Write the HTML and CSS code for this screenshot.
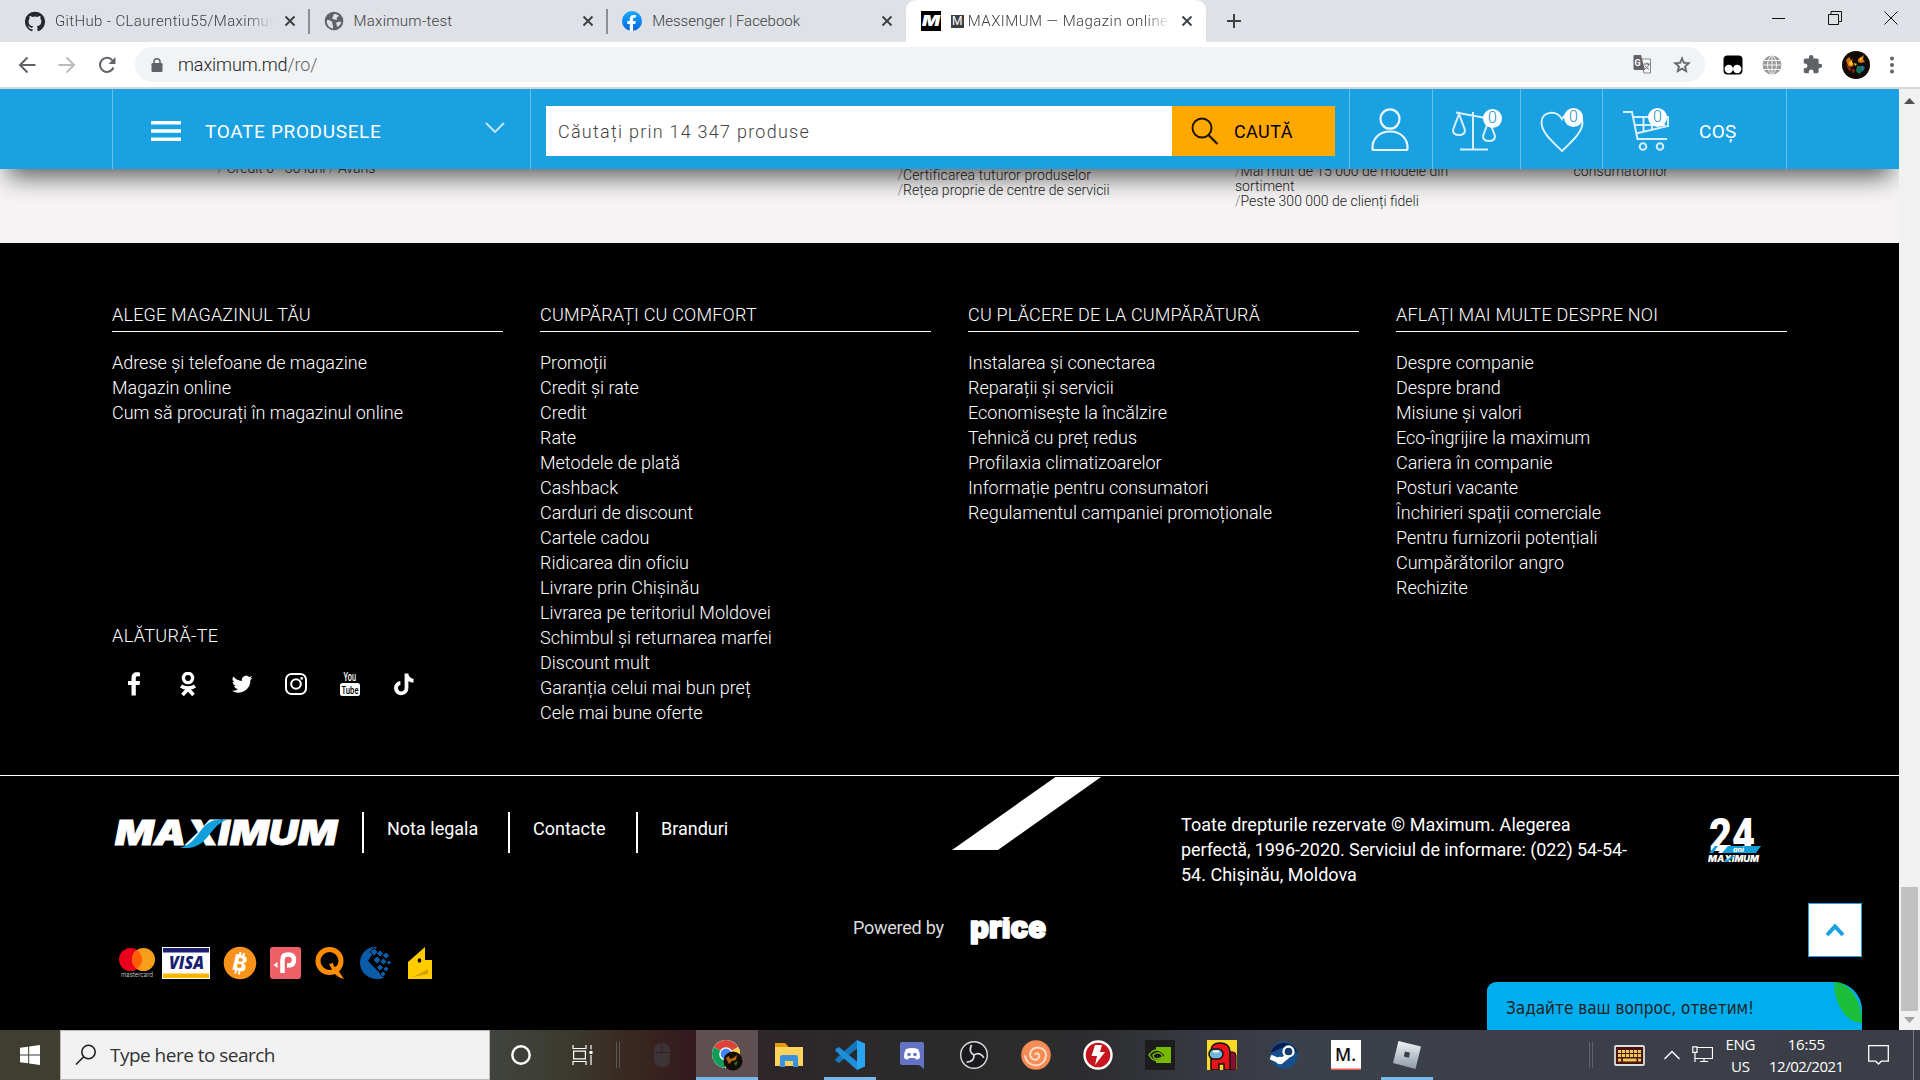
FILE: index.html
```html
<!DOCTYPE html>
<html lang="ro">
<head>
<meta charset="utf-8">
<title>MAXIMUM — Magazin online</title>
<link rel="stylesheet" href="styles.css">
</head>
<body>
<div class="tabstrip">
  <div class="tab">
    <svg class="fav" width="21" height="21" viewBox="0 0 24 24"><path fill="#24292e" d="M12 .3a12 12 0 0 0-3.8 23.4c.6.1.8-.3.8-.6v-2c-3.3.7-4-1.6-4-1.6-.6-1.4-1.4-1.8-1.4-1.8-1-.7.1-.7.1-.7 1.2 0 1.9 1.2 1.9 1.2 1 1.8 2.8 1.3 3.5 1 0-.8.4-1.3.7-1.6-2.7-.3-5.5-1.3-5.5-6 0-1.2.5-2.3 1.3-3.1-.2-.4-.6-1.6 0-3.2 0 0 1-.3 3.4 1.2a11.5 11.5 0 0 1 6 0c2.3-1.5 3.3-1.2 3.3-1.2.6 1.6.2 2.8 0 3.2.9.8 1.3 1.9 1.3 3.2 0 4.6-2.8 5.6-5.5 5.9.5.4.9 1 .9 2.2v3.3c0 .3.1.7.8.6A12 12 0 0 0 12 .3"/></svg>
    <span class="tab-title fade t1">GitHub - CLaurentiu55/Maximum</span>
    <svg class="close" width="12" height="12" viewBox="0 0 12 12"><path d="M1.5 1.5l9 9m0-9l-9 9"/></svg>
  </div>
  <div class="tab">
    <svg class="fav" width="20" height="20" viewBox="0 0 20 20"><circle cx="10" cy="10" r="9.3" fill="#5f6368"/><path d="M3 9c2 0 4 .5 5 2s-.5 2 1 3v3.5C5 17 2.300 13.500 3 9zM10 3c1.500 0 4 .500 5 1.800L12.500 7 13 9l-2.500-.5L8 7.500zM12 12l3-1.500 2.300.5c-.5 2-2 4-4 5z" fill="#dee1e6"/></svg>
    <span class="tab-title t2">Maximum-test</span>
    <svg class="close" width="12" height="12" viewBox="0 0 12 12"><path d="M1.5 1.5l9 9m0-9l-9 9"/></svg>
  </div>
  <div class="tab last">
    <svg class="fav" width="20" height="20" viewBox="0 0 20 20"><defs><linearGradient id="fb" x2="0" y2="1"><stop stop-color="#18acfe"/><stop offset="1" stop-color="#0163e0"/></linearGradient></defs><circle cx="10" cy="10" r="10" fill="url(#fb)"/><path fill="#fff" d="M13.300 12.900l.5-2.900H11V8.100c0-.8.4-1.600 1.600-1.600h1.300V4.100s-1.200-.2-2.300-.2c-2.300 0-3.800 1.400-3.800 3.900V10H5.300v2.900h2.500v7a10 10 0 0 0 3.200 0v-7z"/></svg>
    <span class="tab-title t3">Messenger | Facebook</span>
    <svg class="close" width="12" height="12" viewBox="0 0 12 12"><path d="M1.5 1.5l9 9m0-9l-9 9"/></svg>
  </div>
  <div class="tab active">
    <svg class="fav" width="20" height="20" viewBox="0 0 20 20"><rect width="20" height="20" fill="#000"/><text x="1" y="15" font-family="Inter" font-weight="900" font-style="italic" font-size="14" textLength="18" lengthAdjust="spacingAndGlyphs" fill="#fff">M</text></svg>
    <span class="mbox">M</span>
    <span class="tab-title fade t4">MAXIMUM — Magazin online d</span>
    <svg class="close" width="12" height="12" viewBox="0 0 12 12"><path d="M1.5 1.5l9 9m0-9l-9 9"/></svg>
  </div>
  <svg class="plus" width="16" height="16" viewBox="0 0 16 16"><path d="M8 1v14M1 8h14" stroke="#3c4043" stroke-width="2"/></svg>
  <div class="winbtns">
    <svg width="14" height="14" viewBox="0 0 14 14"><path d="M0 7.500h13" stroke="#111"/></svg>
    <svg width="14" height="14" viewBox="0 0 14 14"><path d="M.5 3.500h10v10H.5zM3 3.500v-3h10.500v10H11" fill="none" stroke="#111"/></svg>
    <svg width="14" height="14" viewBox="0 0 14 14"><path d="M.5.5l13 13m0-13l-13 13" stroke="#111"/></svg>
  </div>
</div>
<div class="toolbar">
  <svg width="18" height="18" viewBox="0 0 18 18" class="nav"><path d="M17.500 9H2M9.500 1.500L2 9l7.500 7.500"/></svg>
  <svg width="18" height="18" viewBox="0 0 18 18" class="nav dim"><path d="M.5 9H16M8.500 1.500L16 9l-7.500 7.500"/></svg>
  <svg width="18" height="18" viewBox="0 0 18 18" class="nav"><path d="M15.500 11.500A7 7 0 1 1 14.500 4.500"/><path d="M17.500 1v7h-7z" class="tip"/></svg>
  <div class="omnibox">
    <svg width="12" height="14" viewBox="0 0 12 14"><rect x=".5" y="5" width="11" height="9" rx="1.300" fill="#5f6368"/><path d="M3 6V3.800a3 3 0 0 1 6 0V6" fill="none" stroke="#5f6368" stroke-width="1.500"/></svg>
    <span class="url">maximum.md<i>/ro/</i></span>
    <svg class="tr" width="19" height="19" viewBox="0 0 19 19"><path d="M8 4h9.500v14H11z" fill="#fff" stroke="#80868b"/><path d="M1 0h7l4 15H2a1.500 1.500 0 0 1-1.500-1.500V1z" fill="#5f6368"/><text x="1.500" y="10.500" font-family="Roboto" font-weight="700" font-size="9" fill="#fff">G</text><path d="M11 9h6M14 7.500V9M16 9c-.6 2.500-2.500 4-4 5M12 10.500c1 2 2.500 3 4 4" fill="none" stroke="#5f6368"/></svg>
    <svg width="20" height="20" viewBox="0 0 24 24"><path fill="#5f6368" d="M22 9.240l-7.190-.62L12 2 9.190 8.630 2 9.240l5.460 4.730L5.820 21 12 17.270 18.180 21l-1.630-7.030L22 9.240zM12 15.400l-3.760 2.270 1-4.280-3.320-2.880 4.380-.38L12 6.100l1.710 4.040 4.380.38-3.320 2.880 1 4.280L12 15.400z" stroke="#5f6368" stroke-width=".6"/></svg>
  </div>
  <div class="exts">
    <svg width="20" height="20" viewBox="0 0 20 20"><rect x=".5" y=".5" width="19" height="19" rx="4"/><circle cx="5.800" cy="14" r="4.200" fill="#fff"/><circle cx="14.200" cy="14" r="4.200" fill="#fff"/></svg>
    <svg width="20" height="20" viewBox="0 0 20 20"><circle cx="10" cy="10" r="9.500" fill="#9a9a9a"/><path d="M10 0v20M0 10h20M1.500 5.500h17M1.500 14.500h17M10 0c-6 5-6 15 0 20c6-5 6-15 0-20" fill="none" stroke="#f4f4f4"/></svg>
    <svg width="21" height="21" viewBox="0 0 24 24"><path fill="#5f6368" d="M20.500 11H19V7c0-1.100-.9-2-2-2h-4V3.500a2.500 2.500 0 0 0-5 0V5H4c-1.100 0-2 .9-2 2v3.800h1.500c1.500 0 2.700 1.200 2.700 2.700S5 16.200 3.500 16.200H2V20c0 1.100.9 2 2 2h3.800v-1.500c0-1.500 1.200-2.700 2.700-2.700s2.700 1.200 2.700 2.700V22H17c1.100 0 2-.9 2-2v-4h1.500a2.500 2.500 0 0 0 0-5z"/></svg>
    <svg width="28" height="28" viewBox="0 0 28 28"><circle cx="14" cy="14" r="14" fill="#120a04"/><path d="M4 9l3-3 2 3 2-1-2 4 3 1-2 3-4-1zM16 8l6-4-1 4 2 3-4 1-3-1z" fill="#d9700f"/><path d="M7 11l3-1 1 3-3 2zM18 7l3-1-3 5zM12 12l3 1-2 2z" fill="#ffc93a"/><path d="M15 15l5 0 2 4-5 4-3-3z" fill="#12765c"/><path d="M20 14l3 3-3 3z" fill="#2c69c8"/><path d="M4 14l5 3-1 4zM10 18l3 1-2 4z" fill="#a32a10"/></svg>
    <svg width="6" height="18" viewBox="0 0 6 18"><g fill="#5f6368"><circle cx="3" cy="2.500" r="2"/><circle cx="3" cy="9" r="2"/><circle cx="3" cy="15.500" r="2"/></g></svg>
  </div>
</div>
<div class="viewport">
  <div class="page">
    <header class="header">
      <div class="cell menu">
        <svg width="30" height="20" viewBox="0 0 30 20"><path d="M0 1.700h30M0 10h30M0 18.200h30" stroke="#fff" stroke-width="3.500"/></svg>
        <span class="menu-t">TOATE PRODUSELE</span>
        <svg class="chev" width="20" height="12" viewBox="0 0 20 12"><path d="M1 1l9 9 9-9" fill="none" stroke="#c9e8f7" stroke-width="1.800"/></svg>
      </div>
      <div class="cell search">
        <div class="field"><span class="ph">Căutați prin 14 347 produse</span></div>
        <div class="btn">
          <svg width="28" height="28" viewBox="0 0 28 28"><circle cx="11" cy="11" r="9.500" fill="none" stroke="#1d1500" stroke-width="1.900"/><path d="M17.500 18l9 9" stroke="#1d1500" stroke-width="2.200"/></svg>
          <span class="btn-t">CAUTĂ</span>
        </div>
      </div>
      <div class="cell user">
        <svg width="40" height="44" viewBox="0 0 40 44"><g fill="none" stroke="#e9f6fd" stroke-width="2.200"><ellipse cx="20" cy="11" rx="9.500" ry="9.700"/><path d="M2.500 40.500C2 31 9 23.500 20 23.500S38 31 37.500 40.500q0 1.500-1.500 1.500H4q-1.500 0-1.500-1.500z"/></g></svg>
      </div>
      <div class="cell cmp">
        <svg width="46" height="42" viewBox="0 0 46 42"><g fill="none" stroke="#d8effb" stroke-width="2"><path d="M22 2v37M5 2.500L40 9M9 39.500h28"/><path d="M8 4L2 20q0 5 6 5t6-5zM38 10l-6 16q0 5 6 5t6-5z"/></g></svg>
        <span class="badge">0</span>
      </div>
      <div class="cell fav-c">
        <svg width="44" height="44" viewBox="0 0 44 44"><path d="M22 42C14 34 1.500 24 1.500 13.500 1.500 2 17 .5 22 10 27 .5 42.500 2 42.500 13.500 42.500 24 30 34 22 42z" fill="none" stroke="#e3f4fc" stroke-width="1.900"/></svg>
        <span class="badge">0</span>
      </div>
      <div class="cell cart">
        <svg width="46" height="42" viewBox="0 0 46 42"><g fill="none" stroke="#d8effb" stroke-width="2"><path d="M0 2h9l5.500 27H44M10.500 7H45v9L13 23.500M12 15h30M20.500 7v15M29 7v12"/><circle cx="20" cy="36.500" r="3.300"/><circle cx="37" cy="36.500" r="3.300"/></g></svg>
        <span class="badge">0</span>
        <span class="cos">COȘ</span>
      </div>
      <div class="cell end"></div>
    </header>
    <section class="benefits">
      <p class="b1"><i>/</i> <span>Credit 0 - 36 luni</span> <i>/</i> <span>Avans</span></p>
      <p></p>
      <p class="b3"><i>/</i><span class="b3a">Certificarea tuturor produselor</span><br><i>/</i><span>Rețea proprie de centre de servicii</span></p>
      <p class="b4"><i>/</i><span>Mai mult de 15 000 de modele din</span><br><span>sortiment</span><br><i>/</i><span>Peste 300 000 de clienți fideli</span></p>
      <p class="b4"><span class="b5a">consumatorilor</span></p>
    </section>
    <footer class="footer">
      <div class="cols">
        <div class="col">
          <h4>ALEGE MAGAZINUL TĂU</h4>
          <ul><li>Adrese și telefoane de magazine</li><li>Magazin online</li><li>Cum să procurați în magazinul online</li></ul>
          <h5>ALĂTURĂ-TE</h5>
          <div class="social">
            <svg width="24" height="24" viewBox="0 0 24 24"><path d="M18 .5v3.700h-2.200c-1.700 0-2 .8-2 2V9H18l-.5 4h-3.700v10.500H9.500V13H6V9h3.500V5.900C9.500 2.300 11.600.3 14.900.3c1.500 0 2.700.1 3.100.2z"/></svg>
            <svg width="24" height="24" viewBox="0 0 24 24"><circle cx="12" cy="6" r="4.600" fill="none" stroke="#fff" stroke-width="3.400"/><path d="M5 14c3.500 2.800 10.500 2.800 14 0M6.500 23l5.500-6 5.500 6" fill="none" stroke="#fff" stroke-width="3.600"/></svg>
            <svg width="24" height="24" viewBox="0 0 24 24"><path d="M22.500 5.700a9 9 0 0 1-2.400.7 4.200 4.200 0 0 0 1.800-2.300c-.8.500-1.700.8-2.700 1a4.200 4.200 0 0 0-7.200 3.900A12 12 0 0 1 3.300 4.500a4.200 4.200 0 0 0 1.300 5.700 4 4 0 0 1-1.900-.5c0 2 1.400 3.800 3.400 4.200-.6.200-1.300.2-1.900.1a4.200 4.200 0 0 0 3.900 2.900A8.500 8.500 0 0 1 1.900 18.700 12 12 0 0 0 20.400 8.100c.8-.6 1.500-1.400 2.100-2.400z"/></svg>
            <svg width="24" height="24" viewBox="0 0 24 24"><g fill="none" stroke="#fff" stroke-width="2"><rect x="2" y="2" width="20" height="20" rx="5.500"/><circle cx="12" cy="12" r="4.800"/></g><circle cx="17.700" cy="6.400" r="1.400"/></svg>
            <svg width="24" height="24" viewBox="0 0 24 24"><text x="5.500" y="9" font-family="Roboto" font-size="12" font-weight="500" textLength="12.500" lengthAdjust="spacingAndGlyphs">You</text><rect x="2" y="11" width="20" height="13" rx="2.500"/><text class="dark" x="3.500" y="21.500" font-family="Roboto" font-size="11" font-weight="500" textLength="17" lengthAdjust="spacingAndGlyphs">Tube</text></svg>
            <svg width="24" height="24" viewBox="0 0 24 24"><path d="M12.600 1.500h3.700c.2 2.800 2.200 5 5.200 5.200v3.800c-1.900 0-3.700-.6-5.100-1.600v7.200a7.200 7.200 0 1 1-8-7.100v4a3.300 3.300 0 1 0 4.200 3.100z"/></svg>
          </div>
        </div>
        <div class="col">
          <h4>CUMPĂRAȚI CU COMFORT</h4>
          <ul><li>Promoții</li><li>Credit și rate</li><li>Credit</li><li>Rate</li><li>Metodele de plată</li><li>Cashback</li><li>Carduri de discount</li><li>Cartele cadou</li><li>Ridicarea din oficiu</li><li>Livrare prin Chișinău</li><li>Livrarea pe teritoriul Moldovei</li><li>Schimbul și returnarea marfei</li><li>Discount mult</li><li>Garanția celui mai bun preț</li><li>Cele mai bune oferte</li></ul>
        </div>
        <div class="col">
          <h4>CU PLĂCERE DE LA CUMPĂRĂTURĂ</h4>
          <ul><li>Instalarea și conectarea</li><li>Reparații și servicii</li><li>Economisește la încălzire</li><li>Tehnică cu preț redus</li><li>Profilaxia climatizoarelor</li><li>Informație pentru consumatori</li><li>Regulamentul campaniei promoționale</li></ul>
        </div>
        <div class="col">
          <h4>AFLAȚI MAI MULTE DESPRE NOI</h4>
          <ul><li>Despre companie</li><li>Despre brand</li><li>Misiune și valori</li><li>Eco-îngrijire la maximum</li><li>Cariera în companie</li><li>Posturi vacante</li><li>Închirieri spații comerciale</li><li>Pentru furnizorii potențiali</li><li>Cumpărătorilor angro</li><li>Rechizite</li></ul>
        </div>
      </div>
      <div class="bottom">
        <div class="left">
          <div class="brandrow">
            <svg class="logo" width="228" height="34" viewBox="0 0 228 34"><text x="2" y="29" font-family="Inter" font-weight="900" font-style="italic" font-size="34" textLength="222" lengthAdjust="spacingAndGlyphs" fill="#fff" stroke="#fff" stroke-width=".8">MAXIMUM</text><path d="M67 32C86 27 87 5 105 3.500h10C96 9 97 30 75 32z" fill="#12a0dc"/></svg>
            <a class="n1">Nota legala</a><a class="n2">Contacte</a><a class="n3">Branduri</a>
          </div>
          <div class="pay">
            <svg width="38" height="34" viewBox="0 0 38 34"><circle cx="12.500" cy="13.500" r="11.500" fill="#eb001b"/><circle cx="25.500" cy="13.500" r="11.500" fill="#f79e1b"/><path d="M19 4a11.500 11.500 0 0 1 0 19 11.500 11.500 0 0 1 0-19z" fill="#ff5f00"/><text x="3" y="31" font-family="Inter" font-size="7" textLength="32" lengthAdjust="spacingAndGlyphs" fill="#ddd">mastercard</text></svg>
            <svg width="48" height="34" viewBox="0 0 48 34"><rect y="1" width="48" height="32" fill="#fff"/><path d="M1 2h46v4.500H1z" fill="#1a1f71"/><path d="M1 27.500h46V32H1z" fill="#f7b600"/><text x="7" y="23" font-family="Open Sans" font-weight="800" font-style="italic" font-size="17" textLength="35" lengthAdjust="spacingAndGlyphs" fill="#1a1f71">VISA</text></svg>
            <svg width="34" height="34" viewBox="0 0 34 34"><circle cx="17" cy="17" r="16.300" fill="#f7931a"/><text x="10" y="25" font-family="Inter" font-weight="800" font-size="22" transform="rotate(13 17 17)" fill="#fff" textLength="14" lengthAdjust="spacingAndGlyphs">B</text><path d="M17.500 6l-.8 4M21 7l-.8 3.500M13 24l-.8 3.500M16.500 25l-.7 3.500" stroke="#fff" stroke-width="2"/></svg>
            <svg width="31" height="34" viewBox="0 0 31 34"><rect y="1" width="31" height="32" rx="3" fill="#ef5f67"/><path d="M12.500 27V13.500q0-5 5.500-5 6 0 6 5.500t-6 5.500h-1" fill="none" stroke="#fff" stroke-width="4.500"/><path d="M3.500 19l4-3v6z" fill="#fff"/></svg>
            <svg width="31" height="34" viewBox="0 0 31 34"><circle cx="14.500" cy="15" r="11.500" fill="none" stroke="#ff8c00" stroke-width="5"/><path d="M14 18l4-1 1 4 3-1 1 4 6 9c-5-1-8-4-10-6z" fill="#ff8c00"/></svg>
            <svg width="32" height="34" viewBox="0 0 32 34"><path d="M17 1C7 0 0 8 0 17s8 16 17 16c3 0 5-.5 7-1.500L8 15z" fill="#0a5ba8"/><g fill="#0a5ba8" stroke="#000" stroke-width=".9"><path d="M14 2l4 4-4 4-4-4zM20 4l3.500 3.500L20 11l-3.500-3.500zM26 6l3.500 3.500L26 13l-3.500-3.500zM17 10l4 4-4 4-4-4zM23.500 12l3.500 3.500-3.500 3.500-3.500-3.500zM29 14l2.500 2.500L29 19l-2.500-2.500zM20 18l3.500 3.500L20 25l-3.500-3.500zM26 20l3 3-3 3-3-3zM23 25l3 3-3 3-3-3z"/></g></svg>
            <svg width="26" height="34" viewBox="0 0 26 34"><path d="M1 33V16L18 1v13h7v19z" fill="#fc0"/><path d="M6 31l15-8v5z" fill="#d2a400"/><ellipse cx="12.500" cy="14.500" rx="1.800" ry="2.200" fill="#111"/></svg>
          </div>
        </div>
        <div class="mid">
          <svg class="slash" width="149" height="73" viewBox="0 0 149 73"><path d="M103.500 0H149L46 73H0z" fill="#fff"/></svg>
          <div class="powered"><span class="pw">Powered by</span>
            <svg width="78" height="30" viewBox="0 0 78 30"><text x="0" y="21" font-family="Inter" font-weight="900" font-size="30" textLength="76" lengthAdjust="spacingAndGlyphs" fill="#fff" stroke="#fff" stroke-width="1.600" stroke-linejoin="round">price</text></svg>
          </div>
        </div>
        <div class="right"><p class="copy"><span class="c1">Toate drepturile rezervate © Maximum. Alegerea</span><br><span class="c2">perfectă, 1996-2020. Serviciul de informare: (022) 54-54-</span><br><span>54. Chișinău, Moldova</span></p>
          <svg class="l24" width="54" height="48" viewBox="0 0 54 48"><text x="1" y="36" font-family="Roboto" font-weight="900" font-size="47" textLength="46" lengthAdjust="spacingAndGlyphs" fill="#fff">24</text><path d="M19 31h34l-5 7H14z" fill="#12a0dc"/><path d="M7 31h3l-5 7H1z" fill="#12a0dc"/><path d="M16 31h4l-6 7H10z" fill="#fff"/><text x="25" y="37" font-family="Inter" font-weight="800" font-style="italic" font-size="7" fill="#fff">ani</text><text x="0" y="47" font-family="Inter" font-weight="900" font-style="italic" font-size="8.500" textLength="51" lengthAdjust="spacingAndGlyphs" fill="#fff">MAXIMUM</text><path d="M16 47l8-6h3l-8 6z" fill="#12a0dc"/></svg>
        </div>
      </div>
    </footer>
    <div class="up"><svg width="20" height="14" viewBox="0 0 20 14"><path d="M2 12l8-8.500L18 12" fill="none" stroke="#1aa1e1" stroke-width="4"/></svg></div>
    <div class="chat"><span class="chat-t">Задайте ваш вопрос, ответим!</span><i class="leaf"></i></div>
  </div>
  <div class="scroll">
    <svg width="11" height="6" viewBox="0 0 11 6"><path d="M0 6l5.500-6L11 6z" fill="#505050"/></svg>
    <i class="thumb"></i>
    <svg width="11" height="6" viewBox="0 0 11 6"><path d="M0 0h11L5.500 6z" fill="#a3a3a3"/></svg>
  </div>
</div>
<div class="taskbar">
  <div class="tk start"><svg width="20" height="20" viewBox="0 0 20 20"><path fill="#fff" d="M0 2.800l8.200-1.100v7.800H0zM9.200 1.500L20 0v9.500H9.200zM0 10.500h8.200v7.800L0 17.200zM9.200 10.500H20V20L9.200 18.500z"/></svg></div>
  <div class="searchbox"><svg width="22" height="22" viewBox="0 0 22 22"><circle cx="13.500" cy="8" r="6.700" fill="none" stroke="#222" stroke-width="1.600"/><path d="M8.700 12.800L1 20.500" stroke="#222" stroke-width="1.600"/></svg><span class="sb-t">Type here to search</span></div>
  <div class="tk"><svg width="22" height="22" viewBox="0 0 22 22"><circle cx="11" cy="11" r="8.700" fill="none" stroke="#fff" stroke-width="2.400"/></svg></div>
  <div class="tk"><svg width="22" height="20" viewBox="0 0 22 20"><g fill="none" stroke="#fff" stroke-width="1.200"><path d="M1 0v3.500h13V0M1 20v-3.500h13V20M1.600 6.200h11.800v7.600H1.600zM19 0v4.500M19 10v10"/></g><path d="M17.500 6h3v3h-3z" fill="#fff"/></svg></div>
  <div class="sep"></div>
  <div class="tk mouse"><svg width="18" height="24" viewBox="0 0 18 24"><path d="M1 9V8q0-8 7.500-8v9zM9.500 9V0Q17 0 17 8v1zM1 10h16v6q0 8-8 8t-8-8z" fill="#3c3437"/></svg></div>
  <div class="tk on hl"><svg width="32" height="32" viewBox="0 0 32 32"><circle cx="15" cy="15" r="14" fill="#fff"/><path d="M15 15L2.900 8A14 14 0 0 1 27.100 8z" fill="#db4437"/><path d="M15 15L2.900 8A14 14 0 0 0 14 29z" fill="#0f9d58"/><path d="M15 15V29A14 14 0 0 0 27.500 8.500z" fill="#ffcd40"/><circle cx="15" cy="15" r="6.800" fill="#fff"/><circle cx="15" cy="15" r="5.400" fill="#4285f4"/><circle cx="22" cy="22" r="9.500" fill="#120d06"/><path d="M15 19l3-2 1 3 3-1 4-3-1 5-4 1-3 3z" fill="#b96614"/><path d="M23 24l4-2-2 5z" fill="#2f7a2c"/></svg></div>
  <div class="tk"><svg width="30" height="26" viewBox="0 0 30 26"><path d="M1 1h10l3 3v4H1z" fill="#e09a0c"/><path d="M1 5h28v19H1z" fill="#fdd35e"/><path d="M6 25V15q0-2 2-2h14q2 0 2 2v10h-5v-6h-8v6z" fill="#3a92dd"/></svg></div>
  <div class="tk on"><svg width="30" height="30" viewBox="0 0 30 30"><path d="M22 0l8 3.500v23L22 30z" fill="#2aa3f0"/><path d="M22 0v8.500L4 23 .5 21v-2z" fill="#1477bd"/><path d="M22 30v-8.500L4 7 .5 9v2z" fill="#1f8fdc"/></svg></div>
  <div class="tk"><svg width="26" height="28" viewBox="0 0 26 28"><path d="M3 1h20q2 0 2 2v25l-5-4H3q-2 0-2-2V3q0-2 2-2z" fill="#6374c4"/><path d="M7 8q6-2 12 0 2.500 4 2 9-2 1.500-4 1.500l-1-1.500h-6l-1 1.500q-2 0-4-1.500-.5-5 2-9z" fill="#fff"/><circle cx="10" cy="13.500" r="1.800" fill="#6374c4"/><circle cx="16" cy="13.500" r="1.800" fill="#6374c4"/></svg></div>
  <div class="tk"><svg width="30" height="30" viewBox="0 0 30 30"><circle cx="15" cy="15" r="13.300" fill="#1a191d" stroke="#ddd" stroke-width="1.400"/><g fill="none" stroke="#ddd" stroke-width="1.700"><path d="M15 15q-6-3-2.500-10"/><path d="M15 15q-6-3-2.500-10" transform="rotate(120 15 15)"/><path d="M15 15q-6-3-2.500-10" transform="rotate(240 15 15)"/></g></svg></div>
  <div class="tk"><svg width="30" height="30" viewBox="0 0 30 30"><circle cx="15" cy="15" r="14.800" fill="#f58b55"/><path d="M14 15q1-2.500 3-1.500 3 3-1 6-6 1-7-5 1-7 8-7 8 1 8 8-1 9-10 10-10-1-11-10" fill="none" stroke="#fddcc6" stroke-width="2"/></svg></div>
  <div class="tk"><svg width="30" height="30" viewBox="0 0 30 30"><circle cx="15" cy="15" r="13.500" fill="#c8161e" stroke="#fff" stroke-width="2.400"/><path d="M12 5h7l-2 7h5L12 25l2-9H8.500z" fill="#fff"/></svg></div>
  <div class="tk"><svg width="30" height="30" viewBox="0 0 30 30"><rect width="30" height="30" fill="#1b1c1b"/><path d="M11 7h15v16H11z" fill="#76b900"/><path d="M4 15q6-8 13-3 3 3 3 4-7 7-13 3zM8 15q4-4 8-1 2 2 1 3-5 3-8 1z" fill="#1b1c1b" stroke="#76b900" stroke-width="1.400"/></svg></div>
  <div class="tk"><svg width="30" height="30" viewBox="0 0 30 30"><rect width="30" height="30" fill="#fbd926"/><path d="M22 12h4q3 0 3 4v14h-8z" fill="#8c0e2e" stroke="#111"/><path d="M4 30V11Q4 3 13 3t10 8v19h-6v-6h-5v6z" fill="#e8141c" stroke="#111" stroke-width="1.500"/><rect x="2" y="9" width="14" height="10" rx="5" fill="#6fb6d8" stroke="#111" stroke-width="1.500"/><path d="M6 11.500h6" stroke="#fff" stroke-width="2"/></svg></div>
  <div class="tk"><svg width="28" height="28" viewBox="0 0 28 28"><circle cx="14" cy="14" r="13.800" fill="#16508c"/><path d="M.5 12A14 14 0 0 1 27.500 12L14 6z" fill="#0b1f4d"/><path d="M.5 16l8 3.500 4-.5 5-4" fill="none" stroke="#fff" stroke-width="5"/><circle cx="18.500" cy="10.500" r="5" fill="#16386a" stroke="#fff" stroke-width="2.300"/><circle cx="10" cy="19.500" r="3" fill="none" stroke="#fff" stroke-width="1.600"/></svg></div>
  <div class="tk"><svg width="30" height="30" viewBox="0 0 30 30"><rect width="30" height="29" fill="#fff"/><rect y="28.500" width="30" height="1.500" fill="#e8604c"/><text x="4" y="21" font-family="Open Sans" font-weight="600" font-size="18" textLength="21" lengthAdjust="spacingAndGlyphs" fill="#111">M.</text></svg></div>
  <div class="tk on"><svg width="28" height="28" viewBox="0 0 28 28"><defs><linearGradient id="rb" x2="0" y2="1"><stop stop-color="#f2f4f6"/><stop offset="1" stop-color="#8e99a8"/></linearGradient></defs><path d="M5.500 0L28 5.500 22.500 28 0 22z" fill="url(#rb)"/><path d="M12 10.500l5 1.200-1.200 5-5-1.200z" fill="#3a3e46"/></svg></div>
  <div class="tray">
    <div class="sep s2"></div>
    <svg class="kb" width="31" height="21" viewBox="0 0 31 21"><rect x="1" y="1" width="29" height="19" rx="1" fill="#4a1508" stroke="#ddd" stroke-width="1.800"/><path d="M4 6.500h23M4 10.500h23" stroke="#eec65a" stroke-width="3" stroke-dasharray="3.200 .8"/><path d="M4 15h3.200M9 15h13.500M24 15h3" stroke="#eec65a" stroke-width="3"/></svg>
    <svg class="ch" width="16" height="10" viewBox="0 0 16 10"><path d="M.5 9L8 1.500 15.500 9" fill="none" stroke="#fff" stroke-width="1.400"/></svg>
    <svg class="net" width="21" height="18" viewBox="0 0 21 18"><path d="M5.500 1.500h15v11H3.500M3 7v9M.8.800H5v5.500H.8zM8 15.500h8M12 12.500v3" fill="none" stroke="#fff" stroke-width="1.200"/></svg>
    <div class="lang"><span>ENG</span><span>US</span></div>
    <div class="clock"><span>16:55</span><span class="dt">12/02/2021</span></div>
    <svg class="note" width="21" height="20" viewBox="0 0 21 20"><path d="M.7.700h19.600v15.500h-7L10.500 19 7.700 16.200h-7z" fill="none" stroke="#fff" stroke-width="1.300"/></svg>
    <i class="edge"></i>
  </div>
</div>
</body>
</html>
```

FILE: styles.css
```css
* { box-sizing: border-box; }
body { margin: 0; width: 1920px; height: 1080px; overflow: hidden; font-family: Roboto, "Liberation Sans", sans-serif; font-weight: 300; display: flex; flex-direction: column; background: #000; }
i { font-style: normal; }
svg { display: block; flex: none; }
p, ul, h4, h5 { margin: 0; padding: 0; font-weight: 300; list-style: none; }
span { white-space: nowrap; }

/* browser tabs */
.tabstrip { height: 42px; flex: none; background: #dee1e6; display: flex; align-items: center; padding-left: 10px; }
.tab { width: 298.600px; height: 42px; display: flex; align-items: center; padding: 0 13px 0 15px; position: relative; }
.tab:not(.last):not(.active)::after { content: ""; position: absolute; right: -1px; top: 9px; width: 2px; height: 25px; background: #8b8e93; }
.tab .fav { margin-right: 10px; width: 20px; }
.tab-title { font-size: 15px; line-height: 20px; color: #3c4043; font-weight: 300; flex: none; }
.tab .close { margin-left: auto; }
.close path { stroke: #3c4043; stroke-width: 1.900; }
.fade { width: 218px; overflow: hidden; -webkit-mask-image: linear-gradient(90deg, #000 88%, transparent); mask-image: linear-gradient(90deg, #000 88%, transparent); }
.tab.active { width: 300px; background: #fff; border-radius: 10px 10px 0 0; }
.t1 { letter-spacing: .350px; }
.t2 { letter-spacing: .250px; }
.tab .t4 { width: 202px; letter-spacing: .450px; }
.mbox { background: #3c4043; color: #fff; font-size: 12px; line-height: 13px; width: 13px; text-align: center; margin-right: 4px; font-weight: 400; }
.plus { margin-left: 20px; }
.winbtns { margin-left: auto; display: flex; gap: 42px; padding: 0 22px 6px 0; }

/* browser toolbar */
.toolbar { height: 47px; flex: none; background: #fff; border-bottom: 2px solid #d5d7dc; display: flex; align-items: center; padding-left: 18px; }
.nav { margin-right: 22px; }
.nav path { fill: none; stroke: #5f6368; stroke-width: 2; }
.nav .tip { fill: #5f6368; stroke: none; }
.nav.dim path { stroke: #babcbe; }
.nav + .omnibox { margin-left: -3px; }
.omnibox { width: 1570px; height: 35px; border-radius: 18px; background: #f1f3f4; display: flex; align-items: center; padding: 0 13px 0 16px; }
.url { font-size: 18px; color: #202124; margin-left: 15px; letter-spacing: -.1px; }
.url i { color: #5f6368; }
.tr { margin: 0 20px 0 auto; }
.exts { display: flex; align-items: center; flex: 1; justify-content: space-between; padding: 0 25px 0 18px; }

/* page viewport */
.viewport { height: 941px; flex: none; display: flex; }
.page { width: 1899px; position: relative; overflow: hidden; display: flex; flex-direction: column; background: #000; }
.scroll { width: 21px; background: #f1f1f1; display: flex; flex-direction: column; align-items: center; padding: 9px 0 7px; }
.thumb { width: 17px; height: 124px; background: #c1c1c1; margin: auto 0 6px; }

/* shop header */
.header { height: 80px; flex: none; background: #1aa1e1; display: flex; padding-left: 112px; position: relative; z-index: 2; box-shadow: 0 16px 24px -8px rgba(0,0,0,.62); color: #fff; }
.cell { border-left: 1px solid #68bfe9; display: flex; align-items: center; position: relative; flex: none; }
.menu { width: 418px; padding: 3px 0 0 38px; }
.menu-t { font-size: 19px; font-weight: 400; margin-left: 24px; letter-spacing: .650px; padding-top: 2px; }
.chev { margin: 0 25px 5px auto; }
.search { width: 819px; padding: 4px 0 0 15px; }
.field { width: 626px; height: 50px; background: #fff; color: #444; display: flex; align-items: center; padding-left: 12px; font-size: 18px; }
.ph { letter-spacing: 1.250px; }
.btn { width: 163px; height: 50px; background: #ffa800; color: #000; display: flex; align-items: center; padding-left: 19px; font-size: 18px; font-weight: 400; }
.btn-t { margin-left: 15px; letter-spacing: .4px; }
.user { width: 83px; padding: 1px 0 0 20px; }
.cmp { width: 88px; padding: 3px 0 0 18px; }
.fav-c { width: 82px; padding: 3px 0 0 19px; }
.cart { width: 184px; padding: 3px 0 0 20px; }
.cos { font-size: 19px; font-weight: 400; margin: 2px 0 0 30px; letter-spacing: .3px; }
.badge { position: absolute; top: 20px; left: 50px; width: 19px; height: 19px; border-radius: 50%; background: #fff; color: #1a8fc8; font-size: 16px; line-height: 18px; text-align: center; font-weight: 300; }
.fav-c .badge { left: 43px; top: 19px; }
.cart .badge { left: 45px; top: 19px; }

/* benefits strip */
.benefits { height: 74px; flex: none; background: #f5f3f4; overflow: hidden; display: grid; grid-template-columns: repeat(5, 338.500px); padding-left: 219.500px; font-size: 14px; line-height: 15px; }
.benefits p { color: #222; }
.benefits i { color: #888; }
.b1 { margin: -8px 0 0 -2px; }
.b3 { margin: -1px 0 0 1px; }
.b3a { letter-spacing: .1px; }
.b4 { margin-top: -5px; }
.b5a { letter-spacing: .1px; }

/* footer */
.footer { color: #fff; flex: 1; padding-top: 1px; }
.cols { display: grid; grid-template-columns: repeat(4, 391px); column-gap: 37px; padding: 58px 0 0 112px; height: 532px; border-bottom: 1px solid #fff; }
.col h4 { font-size: 18px; line-height: 26px; height: 30px; border-bottom: 1px solid #fff; margin-bottom: 18px; white-space: nowrap; letter-spacing: .200px; }
.col li { font-size: 18px; line-height: 25px; white-space: nowrap; letter-spacing: -.020px; }
.col h5 { font-size: 18px; line-height: 25px; margin-top: 198px; white-space: nowrap; letter-spacing: .4px; }
.social { display: flex; gap: 30px; padding: 24px 0 0 10px; }
.social svg { fill: #fff; }
.social .dark { fill: #000; }
.bottom { display: grid; grid-template-columns: 853px 328px 1fr; }
.left { padding: 36px 0 0 112px; }
.brandrow { display: flex; height: 41px; }
.logo { margin: 4px 21px 0 1px; }
.brandrow a { border-left: 2px solid #fff; padding: 4px 0 0 23px; height: 41px; font-size: 18px; line-height: 25px; font-weight: 400; white-space: nowrap; }
.n1 { width: 146px; } .n2 { width: 128px; }
.pay { display: flex; margin-top: 93px; padding-left: 6px; }
.pay svg:nth-child(1) { margin-right: 6px; }
.pay svg:nth-child(2) { margin-right: 13px; }
.pay svg:nth-child(3) { margin-right: 13px; }
.pay svg:nth-child(4) { margin-right: 14px; }
.pay svg:nth-child(5) { margin-right: 14px; }
.pay svg:nth-child(6) { margin-right: 15px; }
.slash { margin: 1px 0 0 99px; }
.powered { display: flex; margin-top: 67px; }
.pw { font-size: 18px; color: #ddd; font-weight: 400; width: 117px; line-height: 22px; letter-spacing: -.250px; }
.right { display: flex; align-items: flex-start; padding-top: 36px; }
.copy { font-size: 18px; line-height: 25px; font-weight: 400; width: 527px; }
.c1 { letter-spacing: .050px; }
.c2 { letter-spacing: -.080px; }
.l24 { margin-top: 3px; }
.up { position: absolute; left: 1808px; top: 814px; width: 54px; height: 54px; background: #fff; border: 1px solid #1aa1e1; display: flex; align-items: center; justify-content: center; }
.chat { position: absolute; left: 1487px; top: 893px; width: 375px; height: 48px; background: #00aeef; border-radius: 9px 28px 0 0; overflow: hidden; color: #222; padding: 14px 0 0 19px; font: 400 17px/24px "DejaVu Sans Condensed", "DejaVu Sans", sans-serif; font-stretch: condensed; }
.chat-t { display: block; }
.leaf { position: absolute; right: 0; top: 0; width: 28px; height: 41px; background: #1bbf3a; border-radius: 0 28px 0 28px / 0 41px 0 41px; }

/* taskbar */
.taskbar { height: 50px; flex: none; display: flex; background: linear-gradient(90deg, #403d31 0, #403d31 60px, #41443f 490px, #3b3a2f 570px, #3a2820 630px, #34191e 690px, #2e2628 760px, #2b2a2b 900px, #2c2c2e 1080px, #363941 1200px, #3c404a 1300px, #3b3e47 100%); font-family: "Open Sans", "Noto Sans", sans-serif; color: #fff; font-weight: 400; }
.tk { width: 61.900px; display: flex; align-items: center; justify-content: center; border-bottom: 3px solid transparent; padding-top: 3px; flex: none; }
.tk.start { width: 60px; }
.tk.on { border-bottom-color: #76b9ed; }
.tk.on:not(.hl) { width: 51.900px; margin: 0 5px; }
.tk.hl { background: #5e4f53; }
.searchbox { width: 430px; flex: none; background: #f2f2f2; border: 1px solid #bbb; display: flex; align-items: center; padding-left: 14px; }
.sb-t { color: #333; font-size: 19px; margin-left: 13px; letter-spacing: -.520px; }
.sep { width: 4px; height: 26px; flex: none; border: 1px solid #5a5752; border-width: 0 1px; margin: 12px 0 0 2px; }
.mouse { margin: 0 3px 0 11px; }
.tray { flex: 1; display: flex; align-items: center; padding-left: 151px; }
.sep.s2 { margin: 0 21px 0 0; border-color: #60636b; }
.ch { margin-left: 19px; }
.net { margin-left: 12px; }
.lang, .clock { display: flex; flex: none; flex-direction: column; align-items: center; font-size: 15px; line-height: 22px; letter-spacing: -.200px; }
.lang { margin-left: 12px; width: 30px; }
.clock { margin-left: 2px; width: 98px; }
.dt { letter-spacing: -.500px; }
.note { margin-left: 13px; }
.edge { width: 1px; height: 50px; background: #77797e; margin-left: 24px; flex: none; }
```
